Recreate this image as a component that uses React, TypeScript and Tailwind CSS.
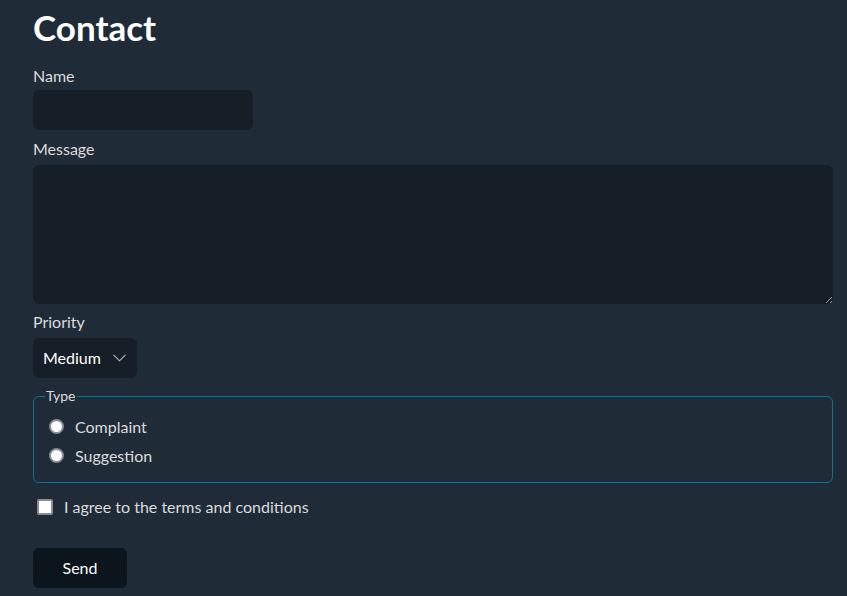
import React from "react";

export default function App() {
  return (
    <div className="min-h-[596px] w-full bg-[#202b38] text-[#dbdbdb]" style={{ fontFamily: "Lato, 'Noto Sans', sans-serif" }}>
      <div className="ml-[33px] w-[800px] pt-[7px]">
        <h1 className="text-[35px] leading-[40px] font-bold text-white">Contact</h1>
        <form className="flex flex-col" onSubmit={(e) => e.preventDefault()}>
          <label className="mt-[17px] text-[16px] leading-[24px]">Name</label>
          <input type="text" className="mt-[2px] h-[40px] w-[220px] rounded-[6px] bg-[#161f27] px-[10px] text-white outline-none" />
          <label className="mt-[7px] text-[16px] leading-[24px]">Message</label>
          <textarea className="mt-[4px] h-[139px] w-[800px] rounded-[6px] bg-[#161f27] px-[10px] py-[8px] text-white outline-none" />
          <label className="mt-[6px] text-[16px] leading-[24px]">Priority</label>
          <div className="relative mt-[4px] h-[40px] w-[104px]">
            <select className="h-[40px] w-[104px] appearance-none rounded-[6px] bg-[#161f27] pl-[10px] text-[16px] text-white outline-none" defaultValue="Medium">
              <option>Low</option>
              <option>Medium</option>
              <option>High</option>
            </select>
            <svg className="pointer-events-none absolute left-[80px] top-[16px]" width="13" height="8" viewBox="0 0 13 8" fill="none">
              <path d="M0.5 0.8 L6.5 6.8 L12.5 0.8" stroke="#b8bcc2" strokeWidth="1.1" />
            </svg>
          </div>
          <fieldset className="mt-[10px] rounded-[6px] border border-[#0b7392] px-[15px] pb-[12px] pt-[8px]">
            <legend className="-ml-[4px] px-[1px] text-[14px] leading-[16px]">Type</legend>
            <label className="flex h-[29px] items-center gap-[11px] text-[16px]">
              <span className="box-border h-[15px] w-[15px] rounded-full border-2 border-[#8b8b95] bg-white" />
              Complaint
            </label>
            <label className="flex h-[29px] items-center gap-[11px] text-[16px]">
              <span className="box-border h-[15px] w-[15px] rounded-full border-2 border-[#8b8b95] bg-white" />
              Suggestion
            </label>
          </fieldset>
          <label className="mt-[12px] flex h-[24px] items-center gap-[11px] pl-[4px] text-[16px]">
            <span className="box-border h-[16px] w-[16px] rounded-[2px] border-2 border-[#8b8b95] bg-white" />
            I agree to the terms and conditions
          </label>
          <button type="submit" className="mt-[29px] h-[40px] w-[94px] rounded-[6px] bg-[#0c151c] text-[16px] text-white">
            Send
          </button>
        </form>
      </div>
    </div>
  );
}
